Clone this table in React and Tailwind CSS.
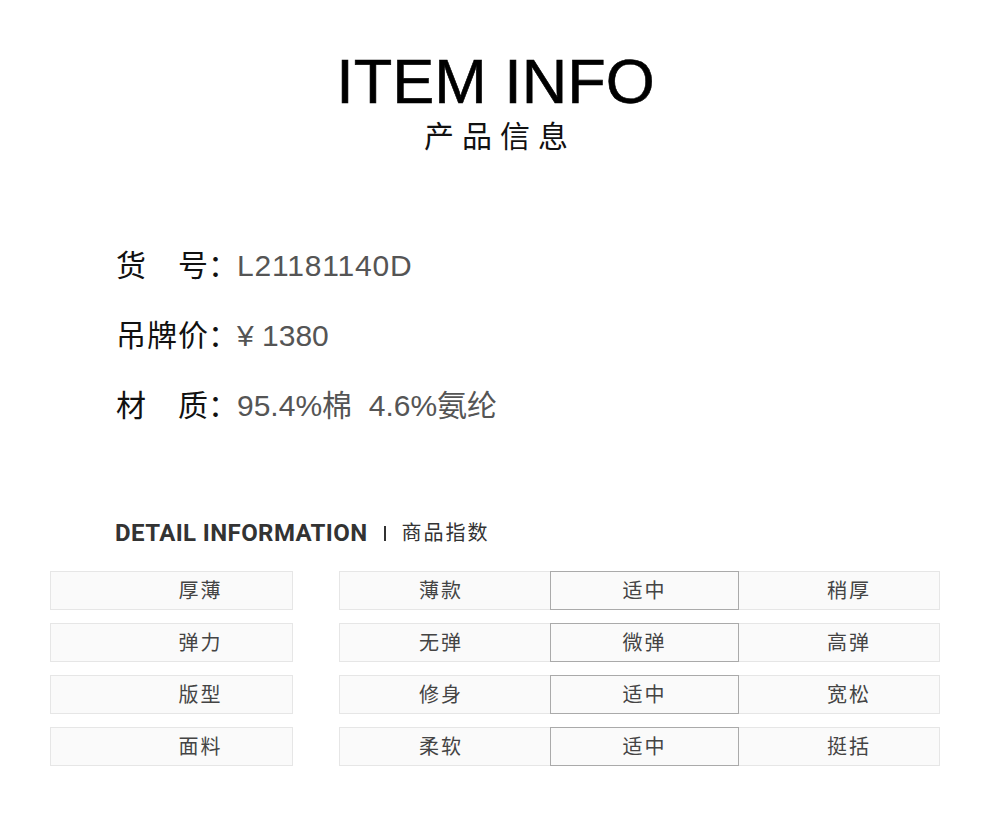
const sans = "font-['Liberation_Sans','Noto_Sans_CJK_SC',sans-serif]";

const info = [
  { label: ["货", "号"], value: "L21181140D", extra: "tracking-[0.8px]" },
  { label: ["吊", "牌", "价"], value: "¥ 1380", extra: "" },
  { label: ["材", "质"], value: "95.4%棉  4.6%氨纶", extra: "" }
];

const rows = [
  { name: "厚薄", opts: ["薄款", "适中", "稍厚"] },
  { name: "弹力", opts: ["无弹", "微弹", "高弹"] },
  { name: "版型", opts: ["修身", "适中", "宽松"] },
  { name: "面料", opts: ["柔软", "适中", "挺括"] }
];

function InfoLine({ label, value, extra }) {
  return (
    <div className="flex items-center h-[70px] text-[30px]">
      <div className="flex justify-between w-[92px] text-[#111]">
        {label.map((c, i) => (
          <span key={i}>{c}</span>
        ))}
      </div>
      <span className="w-[29px] text-[#111]">：</span>
      <span className={`text-[#555] whitespace-pre ${extra}`}>{value}</span>
    </div>
  );
}

function DetailRow({ name, opts }) {
  const cell = "h-[39px] flex items-center justify-center bg-[#fafafa] text-[20px] tracking-[2px] text-[#444]";
  return (
    <div className="flex">
      <div className={`${cell} w-[243px] border border-[#e6e6e6] pl-[58px]`}>{name}</div>
      <div className={`${cell} ml-[46px] w-[211px] border-y border-l border-[#e6e6e6] pr-[8px]`}>{opts[0]}</div>
      <div className={`${cell} w-[189px] border border-[#aaaaaa]`}>{opts[1]}</div>
      <div className={`${cell} w-[201px] border-y border-r border-[#e6e6e6] pl-[20px]`}>{opts[2]}</div>
    </div>
  );
}

export default function App() {
  return (
    <div className={`w-[990px] h-[815px] bg-white ${sans}`}>
      <div className="pt-[49px] flex flex-col items-center">
        <div className="text-[63px] leading-[64px] text-black pl-[1px] [-webkit-text-stroke:0.6px_black]">ITEM INFO</div>
        <div className="mt-[6px] text-[30px] leading-[36px] tracking-[8px] pl-[10px] text-[#111]">
          产品信息
        </div>
      </div>

      <div className="mt-[75px] pl-[116px]">
        {info.map((l, i) => (
          <InfoLine key={i} {...l} />
        ))}
      </div>

      <div className="mt-[78px] pl-[115px] flex items-center h-[30px]">
        <span className="font-['Roboto',sans-serif] font-bold text-[24px] tracking-[0.4px] text-[#333]">
          DETAIL INFORMATION
        </span>
        <span className="ml-[16px] w-[2px] h-[15px] bg-[#333]" />
        <span className="ml-[16px] text-[20px] tracking-[2px] text-[#333]">商品指数</span>
      </div>

      <div className="mt-[23px] pl-[50px] flex flex-col gap-[13px]">
        {rows.map((r) => (
          <DetailRow key={r.name} {...r} />
        ))}
      </div>
    </div>
  );
}
